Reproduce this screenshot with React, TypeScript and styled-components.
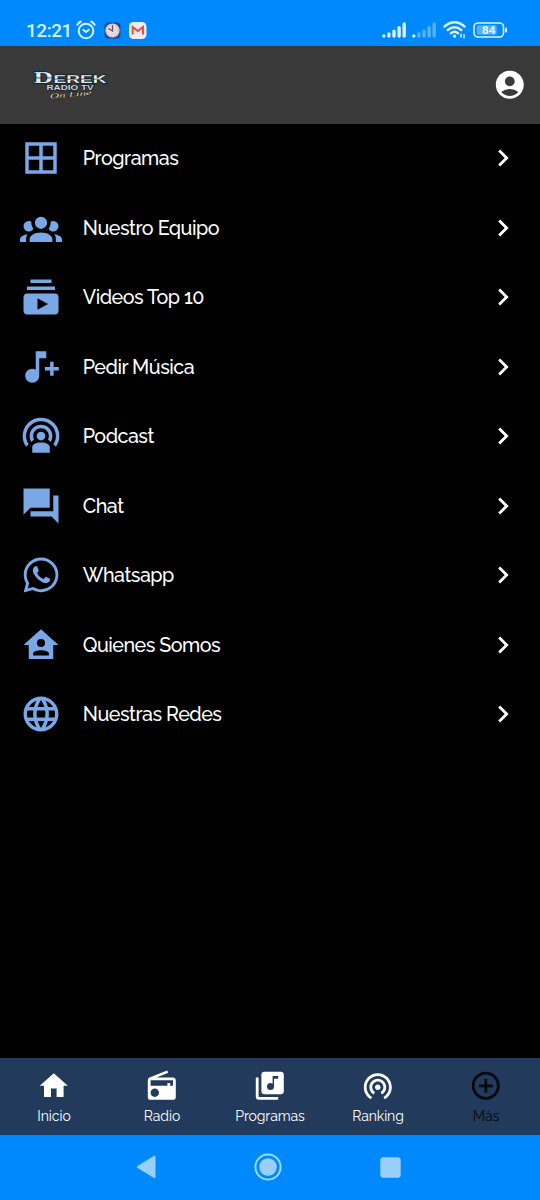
import React from "react";
import styled, { createGlobalStyle } from "styled-components";
import {
  MdAccountCircle,
  MdHome,
  MdRadio,
  MdLibraryMusic,
  MdWifiTethering,
  MdOutlineAddCircleOutline,
  MdSubscriptions,
  MdLanguage,
  MdChevronRight,
} from "react-icons/md";

const GlobalStyle = createGlobalStyle`
  * { box-sizing: border-box; }
  body { margin: 0; background: #000; font-family: Raleway, Lato, sans-serif; }
  svg { display: block; flex: none; }
`;

const Screen = styled.div`
  width: 540px;
  height: 1200px;
  display: flex;
  flex-direction: column;
  overflow: hidden;
`;

const StatusBar = styled.div`
  height: 46px;
  flex: none;
  background: #0088fd;
  color: #d9f3ff;
  display: flex;
  justify-content: space-between;
  align-items: flex-start;
  padding: 20px 32px 0 26px;
`;

const StatusGroup = styled.div<{ $gap: number }>`
  display: flex;
  align-items: center;
  gap: ${(p) => p.$gap}px;
  height: 20px;
`;

const Clock = styled.span`
  font: 500 19px/21px Roboto, sans-serif;
  width: 46px;
  white-space: nowrap;
  letter-spacing: -0.45px;
  padding-top: 1px;
`;

const Header = styled.header`
  height: 77.5px;
  flex: none;
  background: #393939;
  color: #fff;
  display: flex;
  align-items: center;
  justify-content: space-between;
  padding: 0 13.6px 0 32px;
`;

const Menu = styled.main`
  flex: 1;
  background: #000;
`;

const MenuRow = styled.div`
  height: 69.5px;
  display: flex;
  align-items: center;
  padding: 0 20px;
  color: #7aa7e6;
`;

const Label = styled.span`
  flex: 1;
  margin-left: 20.8px;
  color: #fff;
  font-size: 19.7px;
  font-weight: 500;
  line-height: 26px;
  letter-spacing: -0.5px;
  white-space: nowrap;
`;

const Arrow = styled.span`
  color: #fff;
  display: flex;
`;

const TabBar = styled.nav`
  height: 77px;
  flex: none;
  background: #223a5c;
  display: flex;
`;

const Tab = styled.div<{ $active?: boolean }>`
  flex: 1;
  display: flex;
  flex-direction: column;
  align-items: center;
  padding-top: 10.6px;
  color: ${(p) => (p.$active ? "#05080d" : "#fff")};
`;

const TabLabel = styled.span`
  font-size: 14px;
  line-height: 18px;
  margin-top: 4.4px;
  letter-spacing: -0.08px;
`;

const SystemBar = styled.div`
  height: 65px;
  flex: none;
  background: #0088fd;
  display: flex;
  align-items: center;
  justify-content: space-between;
  padding: 0 139px 1px 136px;
`;

const Glyph = ({ d }: { d: string }) => (
  <svg width="42" height="42" viewBox="0 0 24 24" fill="currentColor" fillRule="evenodd">
    <path d={d} />
  </svg>
);

const paths = {
  grid: "M19 11H13V5H19M19 19H13V13H19M11 11H5V5H11M11 19H5V13H11M3 21H21V3H3V21Z",
  group:
    "M12,5.5A3.5,3.5 0 0,1 15.5,9A3.5,3.5 0 0,1 12,12.5A3.5,3.5 0 0,1 8.5,9A3.5,3.5 0 0,1 12,5.5M5,8C5.56,8 6.08,8.15 6.53,8.42C6.38,9.85 6.8,11.27 7.66,12.38C7.16,13.34 6.16,14 5,14A3,3 0 0,1 2,11A3,3 0 0,1 5,8M19,8A3,3 0 0,1 22,11A3,3 0 0,1 19,14C17.84,14 16.84,13.34 16.34,12.38C17.2,11.27 17.62,9.85 17.47,8.42C17.92,8.15 18.44,8 19,8M5.5,18.25C5.5,16.18 8.41,14.5 12,14.5C15.59,14.5 18.5,16.18 18.5,18.25V20H5.5V18.25M0,20V18.5C0,17.11 1.89,15.94 4.45,15.6C3.86,16.28 3.5,17.22 3.5,18.25V20H0M24,20H20.5V18.25C20.5,17.22 20.14,16.28 19.55,15.6C22.11,15.94 24,17.11 24,18.5V20Z",
  music:
    "M9 3V13.55C8.41 13.21 7.73 13 7 13C4.79 13 3 14.79 3 17S4.79 21 7 21 11 19.21 11 17V7H15V3H9M17.2 9H19.2V12H22.2V14H19.2V17H17.2V14H14.2V12H17.2Z",
  podcast:
    "M17,18.25V21.5H7V18.25C7,16.87 9.24,15.75 12,15.75C14.76,15.75 17,16.87 17,18.25M12,5.5A6.5,6.5 0 0,1 18.5,12C18.5,13.25 18.15,14.42 17.54,15.41L16,14.04C16.32,13.43 16.5,12.73 16.5,12C16.5,9.5 14.5,7.5 12,7.5C9.5,7.5 7.5,9.5 7.5,12C7.5,12.73 7.68,13.43 8,14.04L6.46,15.41C5.85,14.42 5.5,13.25 5.5,12A6.5,6.5 0 0,1 12,5.5M12,1.5A10.5,10.5 0 0,1 22.5,12C22.5,14.28 21.77,16.39 20.54,18.11L19.04,16.76C19.96,15.4 20.5,13.76 20.5,12A8.5,8.5 0 0,0 12,3.5A8.5,8.5 0 0,0 3.5,12C3.5,13.76 4.04,15.4 4.96,16.76L3.46,18.11C2.23,16.39 1.5,14.28 1.5,12A10.5,10.5 0 0,1 12,1.5M12,9.5A2.5,2.5 0 0,1 14.5,12A2.5,2.5 0 0,1 12,14.5A2.5,2.5 0 0,1 9.5,12A2.5,2.5 0 0,1 12,9.5Z",
  chat: "M22 6h-3v9H6v3h12l4 4V6zM17 13V2H2v15l4-4h11z",
  whatsapp:
    "M12.04 2C6.58 2 2.13 6.45 2.13 11.91C2.13 13.66 2.59 15.36 3.45 16.86L2.05 22L7.3 20.62C8.75 21.41 10.38 21.83 12.04 21.83C17.5 21.83 21.95 17.38 21.95 11.92C21.95 9.27 20.92 6.78 19.05 4.91C17.18 3.03 14.69 2 12.04 2M12.05 3.67C14.25 3.67 16.31 4.53 17.87 6.09C19.42 7.65 20.28 9.72 20.28 11.92C20.28 16.46 16.58 20.15 12.04 20.15C10.56 20.15 9.11 19.76 7.85 19L7.55 18.83L4.43 19.65L5.26 16.61L5.06 16.29C4.24 15 3.8 13.47 3.8 11.91C3.81 7.37 7.5 3.67 12.05 3.67M16.75,13.96C17,14.09 17.16,14.16 17.21,14.26C17.27,14.37 17.25,14.87 17,15.44C16.8,16 15.76,16.54 15.3,16.56C14.84,16.58 14.83,16.92 12.34,15.83C9.85,14.74 8.35,12.08 8.23,11.91C8.11,11.74 7.27,10.53 7.31,9.3C7.36,8.08 8,7.5 8.26,7.26C8.5,7 8.77,6.97 8.94,7H9.41C9.56,7 9.77,6.94 9.96,7.45L10.65,9.32C10.71,9.45 10.75,9.6 10.66,9.76L10.39,10.17L10,10.59C9.88,10.71 9.74,10.84 9.88,11.09C10,11.35 10.5,12.18 11.2,12.87C12.11,13.75 12.91,14.04 13.15,14.17C13.39,14.31 13.54,14.29 13.69,14.13L14.5,13.19C14.69,12.94 14.85,13 15.08,13.08L16.75,13.96Z",
  home: "M12 3L2 12H5V20H19V12H22L12 3ZM12 8.5A2.3 2.3 0 0 1 12 13.1A2.3 2.3 0 0 1 12 8.5ZM7.5 18V16.9C7.5 15.6 10.3 15 12 15S16.5 15.6 16.5 16.9V18Z",
};

const items: { label: string; icon: React.ReactNode }[] = [
  { label: "Programas", icon: <Glyph d={paths.grid} /> },
  { label: "Nuestro Equipo", icon: <Glyph d={paths.group} /> },
  { label: "Videos Top 10", icon: <MdSubscriptions size={42} /> },
  { label: "Pedir Música", icon: <Glyph d={paths.music} /> },
  { label: "Podcast", icon: <Glyph d={paths.podcast} /> },
  { label: "Chat", icon: <Glyph d={paths.chat} /> },
  { label: "Whatsapp", icon: <Glyph d={paths.whatsapp} /> },
  { label: "Quienes Somos", icon: <Glyph d={paths.home} /> },
  { label: "Nuestras Redes", icon: <MdLanguage size={42} /> },
];

const tabs = [
  { label: "Inicio", Icon: MdHome },
  { label: "Radio", Icon: MdRadio },
  { label: "Programas", Icon: MdLibraryMusic },
  { label: "Ranking", Icon: MdWifiTethering },
  { label: "Más", Icon: MdOutlineAddCircleOutline, active: true },
];

const AlarmIcon = () => (
  <svg width="20" height="20" viewBox="0 0 20 20" fill="none" stroke="currentColor" strokeWidth="2" strokeLinecap="round">
    <circle cx="10" cy="11" r="7.3" />
    <path d="M1.4 4.8Q2.6 2.6 4.8 1.5M18.6 4.8Q17.4 2.6 15.2 1.5M7.3 9.8L10 12L12.9 9.8" />
  </svg>
);

const ClockAppIcon = () => (
  <svg width="17" height="17" viewBox="0 0 17 17">
    <rect x=".5" y=".5" width="16" height="16" rx="4" fill="#28458f" />
    <circle cx="8.5" cy="8.5" r="7.1" fill="#ead9df" />
    <circle cx="8.5" cy="8.5" r="5.7" fill="none" stroke="#a894aa" strokeWidth="1" strokeDasharray="1 2" />
    <path d="M8.5 3.2V9L4.5 6.4" fill="none" stroke="#574c70" strokeWidth="1.2" />
  </svg>
);

const MailIcon = () => (
  <svg width="18" height="17" viewBox="0 0 18 17">
    <rect width="17.5" height="17" rx="4.5" fill="#f2e9ea" />
    <path d="M3.7 12.5V5L8.8 9L14 5V12.5" fill="none" stroke="#dc4b45" strokeWidth="1.9" />
  </svg>
);

const Signal = ({ active }: { active: number }) => (
  <svg width="24" height="16" viewBox="0 0 24 16" stroke="currentColor" strokeWidth="3.4" strokeLinecap="round">
    {[14, 12, 9.2, 5.8, 2].map((y, i) => (
      <path key={y} d={`M${1.8 + i * 5.1} ${y}V14.1`} opacity={i < active ? 1 : 0.4} />
    ))}
  </svg>
);

const WifiIcon = () => (
  <svg width="24" height="18" viewBox="0 0 24 18" fill="none" stroke="currentColor" strokeWidth="2.4" strokeLinecap="round">
    <path d="M1.5 5.5Q11.5-2.8 21.5 5.5M4.8 9Q11.5 3.4 18.2 9M8 12.2Q11.5 9.5 15 12.2" />
    <circle cx="11.5" cy="15.2" r="1.1" fill="currentColor" strokeWidth="1.2" />
    <path d="M18 13.2V16M21 13.8V16.8" strokeWidth="1.5" />
  </svg>
);

const BatteryIcon = () => (
  <svg width="35" height="16" viewBox="0 0 35 16">
    <rect x="1" y="1" width="29.5" height="14" rx="4" fill="none" stroke="currentColor" strokeWidth="1.6" />
    <rect x="3.7" y="3.3" width="20" height="9.4" rx="1.5" fill="#55b0fc" />
    <text x="15.7" y="12.1" textAnchor="middle" fontFamily="Roboto, sans-serif" fontWeight="700" fontSize="11.5" fill="#e6f9ff">84</text>
    <rect x="32" y="5.5" width="2" height="5" rx="1" fill="currentColor" />
  </svg>
);

const Logo = () => (
  <svg width="78" height="36" viewBox="0 -2 78 36">
    <defs>
      <linearGradient id="chrome" x1="0" y1="0" x2="0" y2="1">
        <stop offset=".2" stopColor="#a9d3f3" />
        <stop offset=".42" stopColor="#ffffff" />
        <stop offset=".52" stopColor="#5d88ab" />
        <stop offset=".62" stopColor="#f4fbff" />
        <stop offset="1" stopColor="#9bc8e8" />
      </linearGradient>
    </defs>
    <g fontWeight="700" fill="url(#chrome)" stroke="#0d1218" strokeWidth="1" paintOrder="stroke">
      <text x="1.5" y="14" fontFamily="Liberation Serif, serif" fontSize="17" textLength="19.5" lengthAdjust="spacingAndGlyphs">D</text>
      <text x="21.5" y="14" fontFamily="Liberation Sans, sans-serif" fontSize="11.5" textLength="53" lengthAdjust="spacingAndGlyphs">EREK</text>
    </g>
    <text x="14.5" y="20.7" fontFamily="Liberation Sans, sans-serif" fontWeight="700" fontSize="7" textLength="47" lengthAdjust="spacingAndGlyphs" fill="#c6d9e8" stroke="#10161d" strokeWidth="1" paintOrder="stroke">RADIO TV</text>
    <text x="18" y="29.5" transform="rotate(-5 18 29.5)" fontFamily="Liberation Serif, serif" fontStyle="italic" fontSize="6.8" textLength="42" lengthAdjust="spacingAndGlyphs" fill="#e6d9ae" stroke="#171511" strokeWidth=".6" paintOrder="stroke">On Line</text>
  </svg>
);

export default function App() {
  return (
    <Screen>
      <GlobalStyle />
      <StatusBar>
        <StatusGroup $gap={7.8}>
          <StatusGroup $gap={4}>
            <Clock>12:21</Clock>
            <AlarmIcon />
          </StatusGroup>
          <ClockAppIcon />
          <MailIcon />
        </StatusGroup>
        <StatusGroup $gap={6.3}>
          <Signal active={5} />
          <Signal active={1} />
          <WifiIcon />
          <BatteryIcon />
        </StatusGroup>
      </StatusBar>
      <Header>
        <Logo />
        <MdAccountCircle size={33.6} />
      </Header>
      <Menu>
        {items.map((item) => (
          <MenuRow key={item.label}>
            {item.icon}
            <Label>{item.label}</Label>
            <Arrow>
              <MdChevronRight size={34} />
            </Arrow>
          </MenuRow>
        ))}
      </Menu>
      <TabBar>
        {tabs.map(({ label, Icon, active }) => (
          <Tab key={label} $active={active}>
            <Icon size={33.6} />
            <TabLabel>{label}</TabLabel>
          </Tab>
        ))}
      </TabBar>
      <SystemBar>
        <svg width="20" height="24" viewBox="0 0 20 24" fill="#99cffe">
          <path d="M1.2 11.2L18 .8Q19.5 .3 19.5 2V22Q19.5 23.5 18 23L1.2 12.8Q.2 12 1.2 11.2Z" />
        </svg>
        <svg width="28" height="28" viewBox="0 0 28 28">
          <circle cx="14" cy="14" r="12.6" fill="none" stroke="#99dcff" strokeWidth="2" />
          <circle cx="14" cy="14" r="8.8" fill="#99cffe" />
        </svg>
        <svg width="21" height="21" viewBox="0 0 21 21">
          <rect x=".3" y=".3" width="20.4" height="20.4" rx="3" fill="#99cffe" />
        </svg>
      </SystemBar>
    </Screen>
  );
}
